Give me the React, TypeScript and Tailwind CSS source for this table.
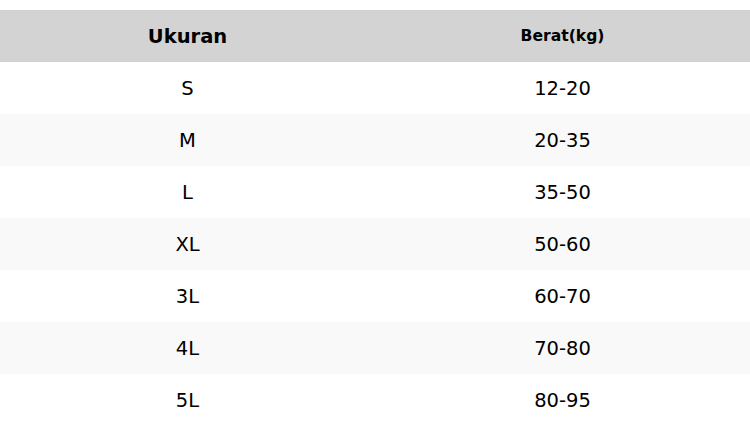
const rows: [string, string][] = [
  ['S', '12-20'],
  ['M', '20-35'],
  ['L', '35-50'],
  ['XL', '50-60'],
  ['3L', '60-70'],
  ['4L', '70-80'],
  ['5L', '80-95'],
];

export default function App() {
  return (
    <div className="w-[750px] bg-white pt-[10px] font-['DejaVu_Sans',sans-serif] text-black">
      <div className="grid grid-cols-2 h-[52px] pt-[2px] bg-[#d3d3d3] font-bold">
        <div className="flex items-center justify-center text-[19.5px]">Ukuran</div>
        <div className="flex items-center justify-center text-[15.6px]">Berat(kg)</div>
      </div>
      {rows.map(([size, weight], i) => (
        <div
          key={size}
          className={'grid grid-cols-2 h-[52px] pt-[2px] text-[19.5px] ' + (i % 2 === 1 ? 'bg-[#f9f9f9]' : 'bg-white')}
        >
          <div className="flex items-center justify-center">{size}</div>
          <div className="flex items-center justify-center">{weight}</div>
        </div>
      ))}
    </div>
  );
}
